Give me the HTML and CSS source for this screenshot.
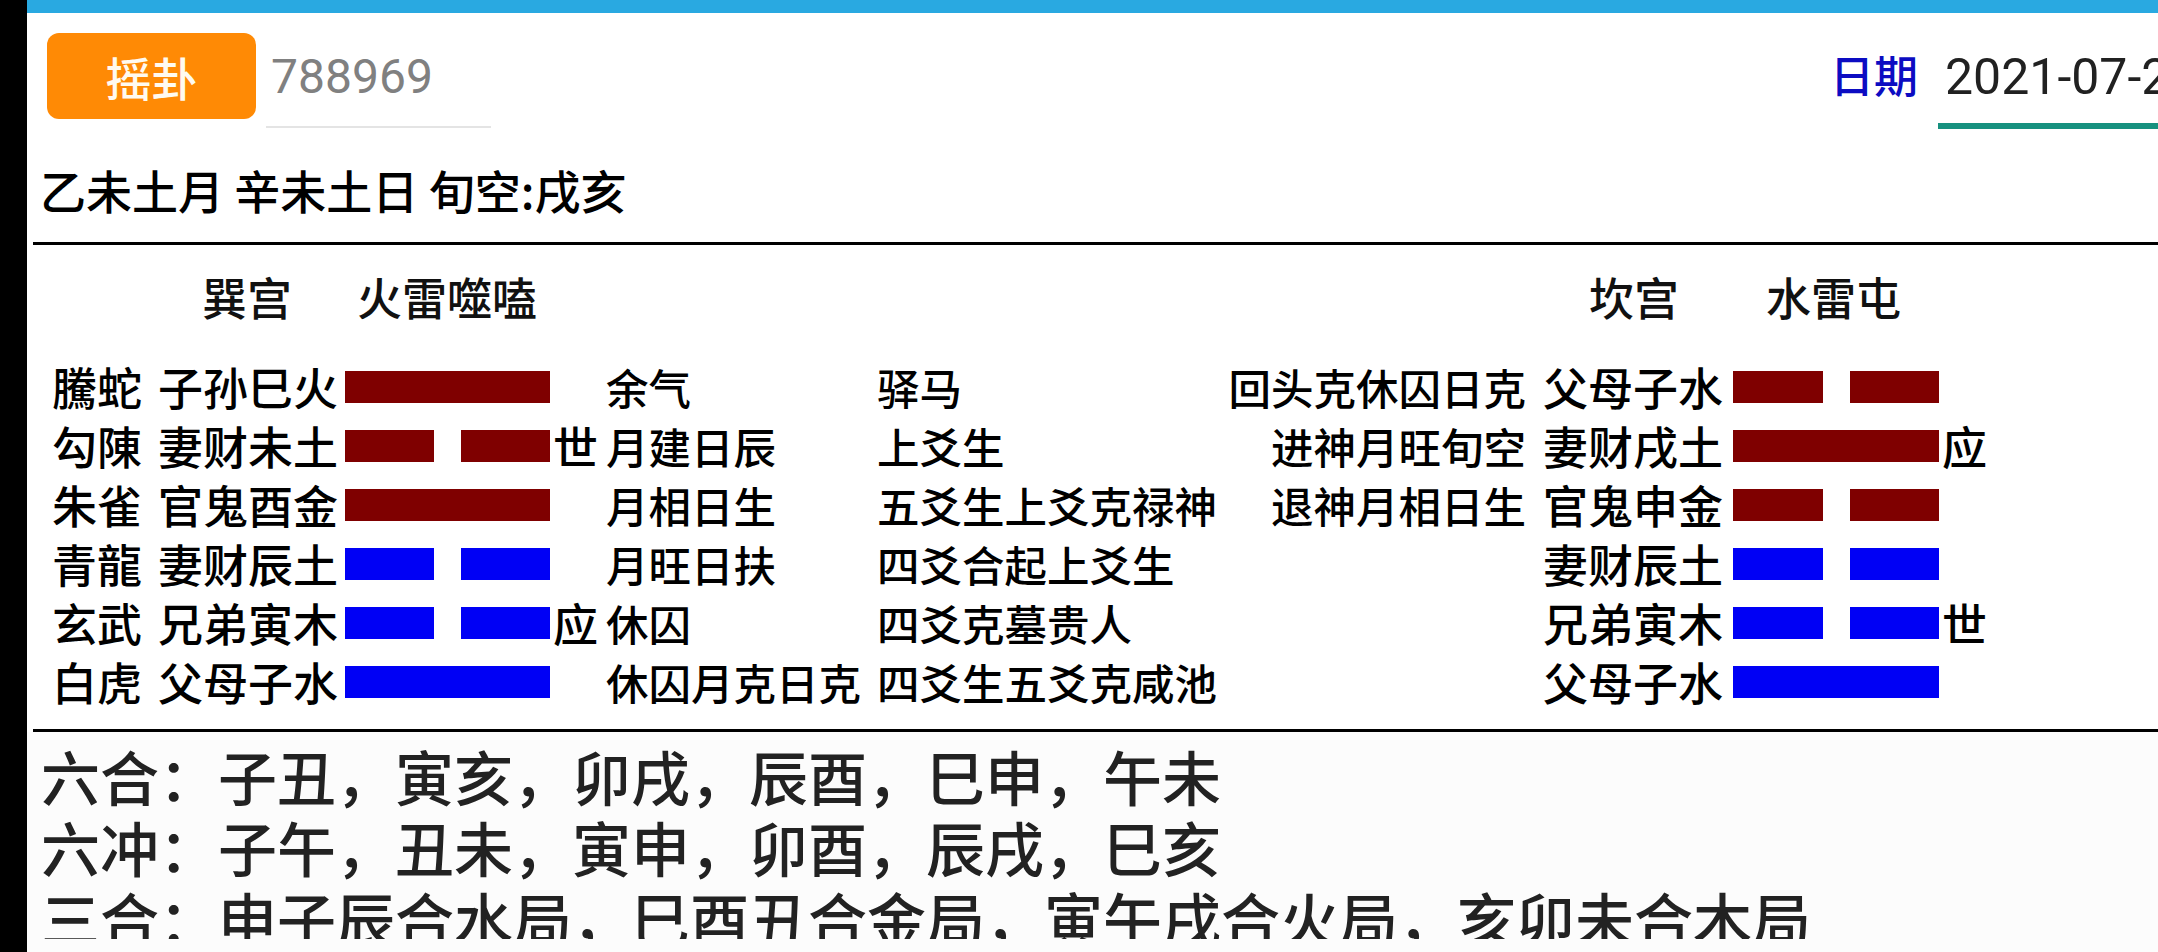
FILE: index.html
```html
<!DOCTYPE html>
<html lang="zh-CN">
<head>
<meta charset="utf-8">
<title>摇卦</title>
<link rel="stylesheet" href="styles.css">
</head>
<body>
<div class="app">
  <div class="side"></div>
  <div class="main">
    <div class="status"></div>
    <div class="toolbar">
      <div class="btn">摇卦</div>
      <div class="num-input">788969</div>
      <div class="spacer"></div>
      <div class="date-label">日期</div>
      <div class="date-input">2021-07-22</div>
    </div>
    <div class="ganzhi">乙未土月 辛未土日 旬空:戌亥</div>
    <div class="rule"></div>
    <div class="gua">
      <div class="line head">
        <span class="h1">巽宫</span><span class="h2">火雷噬嗑</span><span class="h3">坎宫</span><span class="h4">水雷屯</span>
      </div>
      <div class="line">
        <span>騰蛇</span><span>子孙巳火</span>
        <span class="yao"><i class="seg red full"></i></span>
        <span class="mark"></span>
        <span class="note">余气</span><span class="note">驿马</span><span class="note rt">回头克休囚日克</span>
        <span class="qin2">父母子水</span>
        <span class="yao yin"><i class="seg red"></i><i class="seg red"></i></span>
        <span class="mark"></span>
      </div>
      <div class="line">
        <span>勾陳</span><span>妻财未土</span>
        <span class="yao yin"><i class="seg red"></i><i class="seg red"></i></span>
        <span class="mark">世</span>
        <span class="note">月建日辰</span><span class="note">上爻生</span><span class="note rt">进神月旺旬空</span>
        <span class="qin2">妻财戌土</span>
        <span class="yao"><i class="seg red full"></i></span>
        <span class="mark">应</span>
      </div>
      <div class="line">
        <span>朱雀</span><span>官鬼酉金</span>
        <span class="yao"><i class="seg red full"></i></span>
        <span class="mark"></span>
        <span class="note">月相日生</span><span class="note">五爻生上爻克禄神</span><span class="note rt">退神月相日生</span>
        <span class="qin2">官鬼申金</span>
        <span class="yao yin"><i class="seg red"></i><i class="seg red"></i></span>
        <span class="mark"></span>
      </div>
      <div class="line">
        <span>青龍</span><span>妻财辰土</span>
        <span class="yao yin"><i class="seg blue"></i><i class="seg blue"></i></span>
        <span class="mark"></span>
        <span class="note">月旺日扶</span><span class="note">四爻合起上爻生</span><span class="note rt"></span>
        <span class="qin2">妻财辰土</span>
        <span class="yao yin"><i class="seg blue"></i><i class="seg blue"></i></span>
        <span class="mark"></span>
      </div>
      <div class="line">
        <span>玄武</span><span>兄弟寅木</span>
        <span class="yao yin"><i class="seg blue"></i><i class="seg blue"></i></span>
        <span class="mark">应</span>
        <span class="note">休囚</span><span class="note">四爻克墓贵人</span><span class="note rt"></span>
        <span class="qin2">兄弟寅木</span>
        <span class="yao yin"><i class="seg blue"></i><i class="seg blue"></i></span>
        <span class="mark">世</span>
      </div>
      <div class="line">
        <span>白虎</span><span>父母子水</span>
        <span class="yao"><i class="seg blue full"></i></span>
        <span class="mark"></span>
        <span class="note">休囚月克日克</span><span class="note">四爻生五爻克咸池</span><span class="note rt"></span>
        <span class="qin2">父母子水</span>
        <span class="yao"><i class="seg blue full"></i></span>
        <span class="mark"></span>
      </div>
    </div>
    <div class="rule rule2"></div>
    <div class="notes-wrap">
      <div class="notes">
        <div>六合：子丑，寅亥，卯戌，辰酉，巳申，午未</div>
        <div>六冲：子午，丑未，寅申，卯酉，辰戌，巳亥</div>
        <div>三合：申子辰合水局，巳酉丑合金局，寅午戌合火局，亥卯未合木局</div>
      </div>
    </div>
  </div>
</div>
</body>
</html>
```

FILE: styles.css
```css
* { box-sizing: border-box; }
html, body { margin: 0; padding: 0; }
body {
  width: 2158px;
  height: 952px;
  overflow: hidden;
  background: #fff;
  color: #000;
  font-family: "Noto Sans CJK SC", "Noto Sans", sans-serif;
  font-weight: 500;
}
.app { display: flex; height: 952px; }
.side { width: 27px; flex: none; background: #000; }
.main { flex: 1; min-width: 0; display: flex; flex-direction: column; }
.status { height: 13px; flex: none; background: #29a9e1; }

.toolbar {
  display: flex;
  align-items: flex-start;
  height: 116px;
  padding-top: 20px;
  flex: none;
}
.btn {
  margin-left: 20px;
  width: 209px;
  height: 86px;
  border-radius: 12px;
  background: #ff8a05;
  color: #fffaf0;
  font-size: 46px;
  line-height: 86px;
  text-align: center;
  flex: none;
}
.num-input {
  margin-left: 10px;
  width: 225px;
  padding-left: 5px;
  padding-bottom: 5px;
  line-height: 88px;
  border-bottom: 2px solid #e4e4e4;
  font-family: Roboto, "Noto Sans", sans-serif;
  font-weight: 400;
  font-size: 48px;
  color: #808080;
  flex: none;
}
.spacer { flex: 1; }
.date-label {
  font-size: 44px;
  line-height: 82px;
  color: #0c0cc2;
  flex: none;
}
.date-input {
  margin-left: 20px;
  width: 220px;
  padding-left: 7px;
  padding-bottom: 2px;
  line-height: 88px;
  border-bottom: 6px solid #17917f;
  font-family: Roboto, "Noto Sans", sans-serif;
  font-weight: 400;
  font-size: 50px;
  color: #212121;
  white-space: nowrap;
  overflow: hidden;
  flex: none;
}

.ganzhi {
  margin-top: 30px;
  padding-left: 13px;
  font-size: 46px;
  line-height: 60px;
  white-space: nowrap;
}
.rule {
  margin-top: 23px;
  margin-left: 6px;
  height: 3px;
  background: #000;
  flex: none;
}
.rule2 { margin-top: 18px; }

.gua {
  padding-left: 25px;
  padding-top: 22px;
  font-size: 45px;
  line-height: 59px;
  white-space: nowrap;
}
.line {
  display: grid;
  grid-template-columns: 106px 187px 205px 55px 271px 344px 308px 205px 206px 60px;
  height: 59px;
}
.line.head { height: 90px; color: #111; }
.h1 { grid-column: 2; padding-left: 44px; }
.h2 { grid-column: 3 / 6; padding-left: 12px; }
.h3 { grid-column: 8; padding-left: 61px; }
.h4 { grid-column: 9 / 11; padding-left: 33px; }

.yao {
  display: flex;
  align-items: center;
  justify-content: space-between;
}
.seg {
  display: block;
  height: 32px;
  width: calc((100% - 27px) / 2);
}
.seg.full { width: 100%; }
.red { background: #7f0000; }
.blue { background: #0000f5; }
.mark { padding-left: 3px; }
.note { font-size: 42.5px; padding-left: 1px; }
.note.rt { text-align: right; padding-right: 2px; }
.qin2 { padding-left: 15px; }

.notes-wrap { flex: 1; background: #fcfcfc; }
.notes {
  height: 207px;
  overflow: hidden;
  padding-top: 8px;
  padding-left: 14px;
  font-size: 59px;
  line-height: 71px;
  color: #222;
  white-space: nowrap;
}
```
